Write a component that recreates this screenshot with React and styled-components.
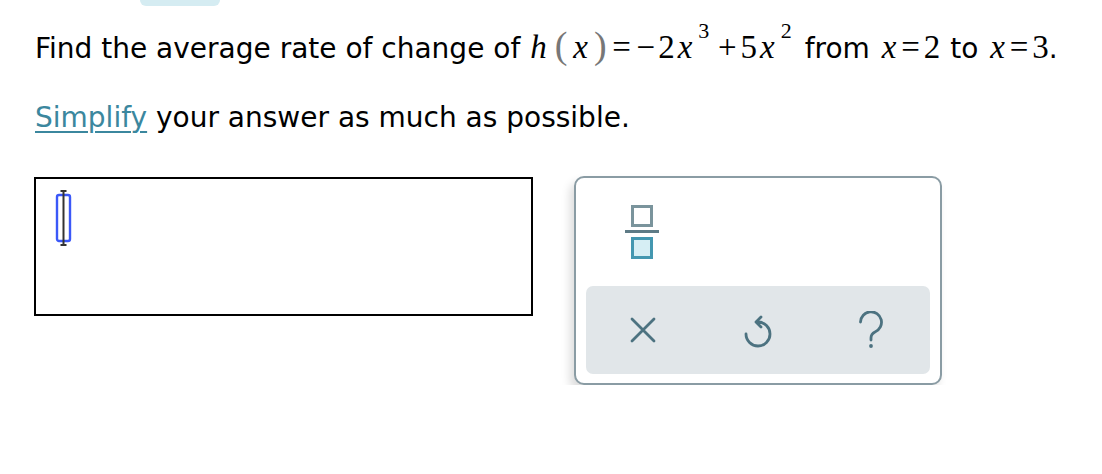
import styled, { createGlobalStyle } from "styled-components";

const GlobalStyle = createGlobalStyle`
  body {
    margin: 0;
    background: #ffffff;
    color: #000000;
    font-family: "DejaVu Sans", Verdana, sans-serif;
  }
`;

const Page = styled.div`
  padding-left: 34px;
`;

const TopTab = styled.div`
  width: 80px;
  height: 6px;
  margin-left: 106px;
  background: #d5ecf2;
  border-radius: 0 0 9px 9px;
`;

const Question = styled.p`
  margin: 23px 0 0 1px;
  font-size: 28px;
  line-height: 40px;
  white-space: nowrap;
`;

const Hint = styled.p`
  margin: 29px 0 0 1px;
  font-size: 28px;
  line-height: 40px;
`;

const Link = styled.a`
  color: #3b879e;
  text-decoration: underline;
  text-underline-offset: 4px;
  text-decoration-thickness: 2px;
`;

const Math = styled.span`
  font-family: "Liberation Serif", "Times New Roman", serif;
  font-size: 33px;
  line-height: 0;
  white-space: nowrap;
  margin: ${(p) => p.$m || "0"};
`;

const Var = styled.span`
  font-style: italic;
  padding: 0 ${(p) => p.$pad || "3px"};
`;

const Op = styled.span`
  display: inline-block;
  width: ${(p) => p.$w || "0.8em"};
  text-align: center;
  margin-left: ${(p) => p.$space || "0"};
`;

const Paren = styled.span`
  font-size: 38px;
  color: #777777;
  padding: 0 3px;
  margin-left: ${(p) => p.$gap || "0"};
`;

const Sup = styled.span`
  font-size: 22px;
  vertical-align: 20px;
  margin-left: 3px;
`;

const AnswerRow = styled.div`
  display: flex;
  align-items: flex-start;
  gap: 41px;
  margin-top: 38px;
`;

const AnswerBox = styled.div`
  box-sizing: border-box;
  width: 499px;
  height: 139px;
  margin-top: 1px;
  border: 2px solid #000000;
  padding: 10px 0 0 16px;
`;

const Keypad = styled.div`
  box-sizing: border-box;
  width: 368px;
  height: 209px;
  border: 2px solid #8a9ca4;
  border-radius: 10px;
  background: #ffffff;
  box-shadow: -4px 6px 10px rgba(0, 0, 0, 0.14);
  padding: 0 10px 9px;
  display: flex;
  flex-direction: column;
`;

const KeyRow = styled.div`
  display: grid;
  grid-template-columns: repeat(3, 1fr);
  align-items: center;
  justify-items: center;
  height: ${(p) => p.$h}px;
  background: ${(p) => p.$bg || "transparent"};
  border-radius: 7px;
`;

const Key = styled.button`
  border: 0;
  background: none;
  padding: 0;
  width: 60px;
  height: 60px;
  display: flex;
  align-items: center;
  justify-content: center;
  color: #4c7280;
  cursor: pointer;
  margin-left: ${(p) => p.$shift || "0"};
`;

const CursorMark = () => (
  <svg width="24" height="58" viewBox="0 0 24 58">
    <rect x="5" y="6" width="13" height="46" rx="2" fill="none" stroke="#3b58f8" strokeWidth="2.4" />
    <path d="M11.5 2v54M8.5 2h6M8.5 56h6" stroke="#333" strokeWidth="2" fill="none" />
  </svg>
);

const FractionIcon = () => (
  <svg width="34" height="54" viewBox="0 0 34 54">
    <rect x="7.5" y="1.5" width="19" height="19" fill="none" stroke="#7a949c" strokeWidth="3" />
    <rect x="0" y="25" width="34" height="3" fill="#5e7b86" />
    <rect x="7.5" y="33.5" width="19" height="19" fill="#d6eef4" stroke="#4497b0" strokeWidth="3" />
  </svg>
);

const ClearIcon = () => (
  <svg width="26" height="26" viewBox="0 0 26 26">
    <path d="M2 2L24 24M24 2L2 24" stroke="currentColor" strokeWidth="2.8" strokeLinecap="round" fill="none" />
  </svg>
);

const UndoIcon = () => (
  <svg width="30" height="36" viewBox="0 0 30 36">
    <path
      d="M15 10A12 12 0 1 1 3 22M18 5L13 10L18 15"
      stroke="currentColor"
      strokeWidth="2.8"
      strokeLinecap="round"
      strokeLinejoin="round"
      fill="none"
    />
  </svg>
);

const HelpIcon = () => (
  <svg width="26" height="38" viewBox="0 0 26 38">
    <path
      d="M2.5 11A10.5 10.5 0 1 1 17 21Q13 23 13 27V29"
      stroke="currentColor"
      strokeWidth="2.8"
      strokeLinecap="round"
      fill="none"
    />
    <circle cx="13" cy="35" r="1.9" fill="currentColor" />
  </svg>
);

export default function App() {
  return (
    <Page>
      <GlobalStyle />
      <TopTab />
      <Question>
        Find the average rate of change of{" "}
        <Math $m="0 4px 0 -2px">
          <Var>h</Var>
          <Paren $gap="2px">(</Paren>
          <Var>x</Var>
          <Paren>)</Paren>
          <Op $w="0.72em">=</Op>
          <Op $w="0.75em">−</Op>2<Var>x</Var>
          <Sup>3</Sup>
          <Op $space="0.15em">+</Op>5<Var>x</Var>
          <Sup>2</Sup>
        </Math>{" "}
        from{" "}
        <Math $m="0 1px 0 2px">
          <Var $pad="1px">x</Var>
          <Op $w="0.8em">=</Op>2
        </Math>{" "}
        to{" "}
        <Math $m="0 0 0 2px">
          <Var $pad="1px">x</Var>
          <Op $w="0.8em">=</Op>3
        </Math>
        .
      </Question>
      <Hint>
        <Link href="#">Simplify</Link> your answer as much as possible.
      </Hint>
      <AnswerRow>
        <AnswerBox>
          <CursorMark />
        </AnswerBox>
        <Keypad>
          <KeyRow $h={108}>
            <Key $shift="-3px">
              <FractionIcon />
            </Key>
          </KeyRow>
          <KeyRow $h={88} $bg="#e1e6e9">
            <Key>
              <ClearIcon />
            </Key>
            <Key>
              <UndoIcon />
            </Key>
            <Key $shift="-3px">
              <HelpIcon />
            </Key>
          </KeyRow>
        </Keypad>
      </AnswerRow>
    </Page>
  );
}
